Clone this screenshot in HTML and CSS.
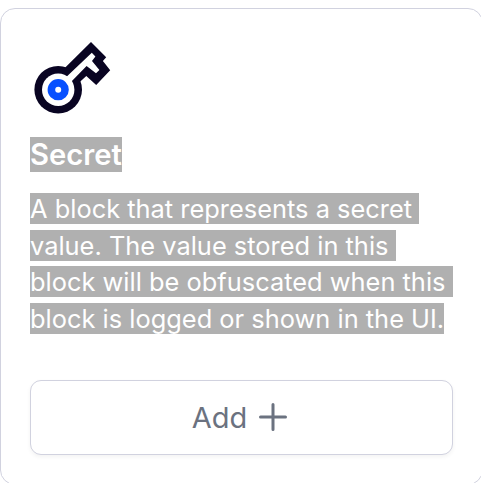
FILE: index.html
```html
<!DOCTYPE html>
<html lang="en">
<head>
<meta charset="utf-8">
<title>Secret block</title>
<link rel="stylesheet" href="styles.css">
</head>
<body>
<article class="card">
  <svg class="logo" viewBox="0 0 84 84" aria-hidden="true">
    <path class="key" d="M35 27.7 61 2 76.2 17.2 72.9 21 80.2 30.2 66.2 45 56.3 36 50.3 41.6 43 51Z"/>
    <circle class="key" cx="28.2" cy="49.7" r="23.8"/>
    <circle class="inside" cx="28.2" cy="49.7" r="16.2"/>
    <path class="inside" d="M36 37.3 61.8 12.8 65.4 16.5 62 20.9 69.4 30 66 33.3 56.6 26 40 43Z"/>
    <circle class="pupil" cx="28.2" cy="49.7" r="6.8"/>
  </svg>
  <h2 class="title"><span class="selected">Secret</span></h2>
  <p class="description"><span class="selected">A block that represents a secret </span><br><span class="selected">value. The value stored in this </span><br><span class="selected">block will be obfuscated when this </span><br><span class="selected">block is logged or shown in the UI.</span></p>
  <button class="add" type="button">Add
    <svg class="plus" viewBox="0 0 30 30" aria-hidden="true"><path d="M15 2.5v25M2.5 15h25"/></svg>
  </button>
</article>
</body>
</html>
```
FILE: styles.css
```css
* { box-sizing: border-box; }
html { overflow: hidden; }
body {
  margin: 0;
  padding-top: 8px;
  background: #fff;
  font-family: Inter, sans-serif;
}
.card {
  width: 483px;
  height: 477px;
  padding: 28px 29px;
  border: 1px solid #d1d2df;
  border-radius: 15px;
  background: #fff;
}
.logo {
  display: block;
  width: 84px;
  height: 84px;
  margin-top: 3px;
}
.key { fill: #090422; }
.inside { fill: #fff; }
.pupil {
  fill: #fff;
  stroke: #0750ff;
  stroke-width: 7.6;
}
.title {
  margin: 13px 0 0;
  font-size: 29.2px;
  line-height: 35px;
  font-weight: 600;
}
.selected {
  background: #b0b0b0;
  color: #fff;
}
.description {
  margin: 19px 0 0;
  font-size: 25.4px;
  font-weight: 370;
  line-height: 36.6px;
  letter-spacing: 0.01px;
  white-space: pre;
}
.add {
  display: flex;
  align-items: center;
  justify-content: center;
  gap: 11px;
  width: 423px;
  height: 75px;
  margin-top: 43px;
  padding: 0 3px 0 0;
  border: 1px solid #d1d2df;
  border-radius: 11px;
  background: #fff;
  box-shadow: 0 2px 4px rgba(0, 0, 0, 0.05);
  color: #6b7280;
  font: 29px/42px Inter, sans-serif;
}
.plus {
  width: 30px;
  height: 30px;
  margin-top: -1px;
  fill: none;
  stroke: currentColor;
  stroke-width: 3;
  stroke-linecap: round;
}
```
